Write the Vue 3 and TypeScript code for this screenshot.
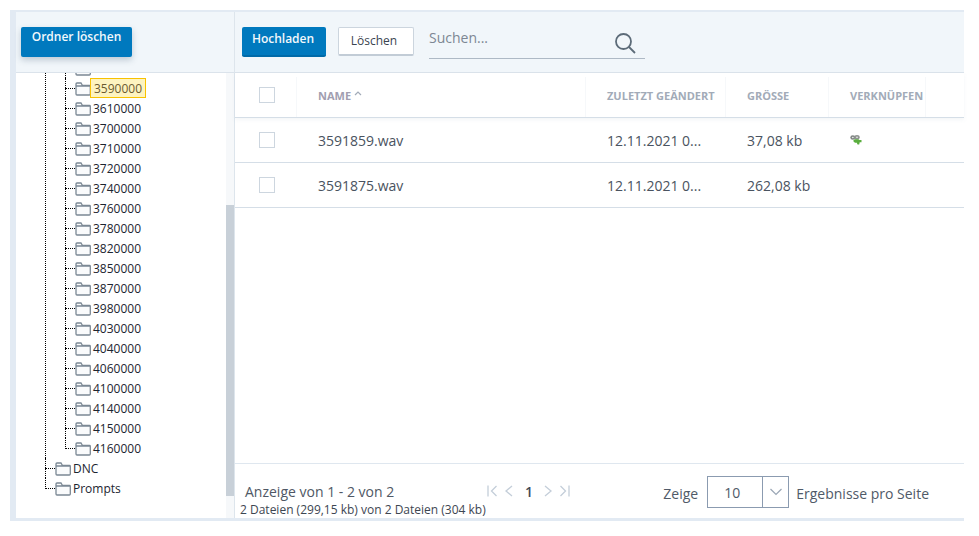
<script setup lang="ts">
const folders: string[] = [
  '3610000', '3700000', '3710000', '3720000', '3740000', '3760000', '3780000', '3820000',
  '3850000', '3870000', '3980000', '4030000', '4040000', '4060000', '4100000', '4140000',
  '4150000', '4160000',
]
const files = [
  { name: '3591859.wav', date: '12.11.2021 0...', size: '37,08 kb', link: true },
  { name: '3591875.wav', date: '12.11.2021 0...', size: '262,08 kb', link: false },
]
</script>

<template>
  <div class="page">
    <div class="frame">
      <aside class="side">
        <div class="side-head">
          <button class="btn primary raised">Ordner löschen</button>
        </div>
        <div class="tree-wrap">
          <div class="tree">
            <ul class="level one">
              <li class="branch">
                <ul class="level two">
                  <li class="node">
                    <svg class="folder" viewBox="0 0 16 14"><path d="M1 3V2q0-1 1-1h4l1.500 2.500H14.500q.8 0 .8.8V12q0 1-1 1H2q-1 0-1-1ZM1 4h14.300" /></svg>
                  </li>
                  <li class="node">
                    <svg class="folder" viewBox="0 0 16 14"><path d="M1 3V2q0-1 1-1h4l1.500 2.500H14.500q.8 0 .8.8V12q0 1-1 1H2q-1 0-1-1ZM1 4h14.300" /></svg>
                    <span class="label selected">3590000</span>
                  </li>
                  <li v-for="f in folders" :key="f" class="node">
                    <svg class="folder" viewBox="0 0 16 14"><path d="M1 3V2q0-1 1-1h4l1.500 2.500H14.500q.8 0 .8.8V12q0 1-1 1H2q-1 0-1-1ZM1 4h14.300" /></svg>
                    <span class="label">{{ f }}</span>
                  </li>
                </ul>
              </li>
              <li class="node">
                <svg class="folder" viewBox="0 0 16 14"><path d="M1 3V2q0-1 1-1h4l1.500 2.500H14.500q.8 0 .8.8V12q0 1-1 1H2q-1 0-1-1ZM1 4h14.300" /></svg>
                <span class="label">DNC</span>
              </li>
              <li class="node">
                <svg class="folder" viewBox="0 0 16 14"><path d="M1 3V2q0-1 1-1h4l1.500 2.500H14.500q.8 0 .8.8V12q0 1-1 1H2q-1 0-1-1ZM1 4h14.300" /></svg>
                <span class="label">Prompts</span>
              </li>
            </ul>
          </div>
          <div class="track"><div class="thumb"></div></div>
        </div>
      </aside>

      <main class="main">
        <div class="toolbar">
          <button class="btn primary solid">Hochladen</button>
          <button class="btn plain">Löschen</button>
          <div class="search">
            <span class="placeholder">Suchen...</span>
            <svg class="lens" viewBox="0 0 22 22" width="22" height="22">
              <circle cx="9.500" cy="9.500" r="7.500" />
              <path d="M15 15l6 6" />
            </svg>
          </div>
        </div>

        <div class="row head">
          <div class="cell check"><span class="box"></span></div>
          <div class="cell name">NAME
            <svg class="caret" viewBox="0 0 8 5" width="8" height="5"><path d="M1 4l3-3 3 3" /></svg>
          </div>
          <div class="cell">ZULETZT GEÄNDERT</div>
          <div class="cell">GRÖSSE</div>
          <div class="cell">VERKNÜPFEN</div>
          <div class="cell last"></div>
        </div>
        <div v-for="file in files" :key="file.name" class="row body">
          <div class="cell check"><span class="box"></span></div>
          <div class="cell name">{{ file.name }}</div>
          <div class="cell">{{ file.date }}</div>
          <div class="cell">{{ file.size }}</div>
          <div class="cell">
            <svg v-if="file.link" class="link" viewBox="0 0 12 10" width="12" height="10">
              <ellipse cx="2.800" cy="2.500" rx="2.500" ry="2.300" fill="#7f8482" />
              <ellipse cx="7" cy="2.300" rx="2.700" ry="2.200" fill="#8f9391" />
              <ellipse cx="2.800" cy="2.500" rx="1" ry=".8" fill="#e4e6e5" />
              <ellipse cx="7" cy="2.300" rx="1" ry=".8" fill="#e4e6e5" />
              <path d="M3.500 5 5 4.300h3.500l1 .7h2v2.300h-1.800l-.5 2.200H7.500L6.800 7.800H5L3.500 6.500Z" fill="#5aae3e" />
            </svg>
          </div>
          <div class="cell last"></div>
        </div>
        <div class="spacer"></div>

        <div class="footer">
          <div class="info">
            <div class="info-top">
              <span class="showing">Anzeige von 1 - 2 von 2</span>
              <div class="pager">
                <svg viewBox="0 0 11 12" width="11" height="12"><path d="M1 .5v11M9.500 1l-5 5 5 5" /></svg>
                <svg viewBox="0 0 9 12" width="9" height="12"><path d="M8 1L2 6l6 5" /></svg>
                <span class="current">1</span>
                <svg viewBox="0 0 9 12" width="9" height="12"><path d="M1 1l6 5-6 5" /></svg>
                <svg viewBox="0 0 11 12" width="11" height="12"><path d="M10 .5v11M1.500 1l5 5-5 5" /></svg>
              </div>
            </div>
            <div class="totals">2 Dateien (299,15 kb) von 2 Dateien (304 kb)</div>
          </div>
          <div class="size">
            <span>Zeige</span>
            <div class="select">
              <span class="value">10</span>
              <span class="arrow">
                <svg viewBox="0 0 14 8" width="14" height="8"><path d="M1.500 1l5.500 5.500L12.500 1" /></svg>
              </span>
            </div>
            <span class="results">Ergebnisse pro Seite</span>
          </div>
        </div>
      </main>
    </div>
  </div>
</template>

<style scoped>
.page {
  width: 979px;
  height: 536px;
  padding: 10px 15px 15px 10px;
  box-sizing: border-box;
  background: #fff;
  font-family: "Open Sans", sans-serif;
  color: #4a5360;
}
.frame {
  display: flex;
  height: 511px;
  box-sizing: border-box;
  border-top: 2px solid #e2eaf3;
  border-left: 6px solid #e2eaf3;
  border-bottom: 3px solid #e2eaf3;
  background: #fff;
}
.side {
  width: 219px;
  flex: none;
  display: flex;
  flex-direction: column;
  border-right: 1px solid #dde5ec;
  box-sizing: border-box;
}
.side-head {
  height: 61px;
  flex: none;
  box-sizing: border-box;
  padding: 12px 0 0 5px;
  background: #f1f6fa;
  border-bottom: 1px solid #dbe3eb;
}
.btn {
  font-family: inherit;
  box-sizing: border-box;
  font-size: 12px;
  padding: 0;
  border-radius: 2px;
}
.primary {
  background: #0079be;
  border: 0;
  color: #f2f8fc;
  font-weight: 600;
}
.raised {
  width: 111px;
  height: 30px;
  padding-bottom: 10px;
  box-shadow: 0 3px 6px rgba(40, 70, 100, 0.25);
}
.tree-wrap {
  flex: 1;
  min-height: 0;
  display: flex;
  overflow: hidden;
}
.tree {
  flex: 1;
  overflow: hidden;
  position: relative;
}
.level {
  list-style: none;
  margin: 0;
  padding: 0;
}
.one {
  margin: -15px 0 0 29px;
}
.two {
  margin-left: 20px;
}
.node {
  position: relative;
  height: 20px;
  display: flex;
  align-items: center;
  padding-left: 10px;
  font-size: 12px;
  color: #1c2530;
}
.node::before {
  content: "";
  position: absolute;
  left: 0;
  top: 10px;
  width: 10px;
  border-top: 1px dotted #000;
}
.node::after,
.branch::after {
  content: "";
  position: absolute;
  left: 0;
  top: 0;
  bottom: 0;
  border-left: 1px dotted #000;
}
.node:last-child::after {
  bottom: 9px;
}
.branch {
  position: relative;
}
.folder {
  width: 16px;
  height: 14px;
  flex: none;
  margin-top: 2px;
  fill: #fafbfc;
  stroke: #7b8894;
  stroke-width: 1.300;
}
.label {
  height: 20px;
  box-sizing: border-box;
  line-height: 18px;
  padding: 2px 3px 0;
  margin-left: -1px;
  white-space: nowrap;
}
.selected {
  background: #fdf3c0;
  border: 1px solid #f8c200;
  padding-top: 1px;
  color: #6a5a30;
}
.track {
  width: 8px;
  flex: none;
  background: #f6f8fa;
  padding-top: 132px;
  box-sizing: border-box;
}
.thumb {
  height: 291px;
  background: #c8d0d8;
}
.main {
  flex: 1;
  min-width: 0;
  display: flex;
  flex-direction: column;
}
.toolbar {
  height: 61px;
  flex: none;
  box-sizing: border-box;
  display: flex;
  align-items: flex-start;
  padding: 15px 0 0 7px;
  background: #f1f6fa;
  border-bottom: 1px solid #dbe3eb;
}
.solid {
  width: 84px;
  height: 30px;
  padding: 0 2px 5px 0;
  border-bottom: 2px solid #006aa8;
}
.plain {
  width: 76px;
  height: 29px;
  margin-left: 12px;
  padding: 0 4px 2px 0;
  background: #fff;
  border: 1px solid #ccd5de;
  border-bottom: 2px solid #c2ccd6;
  color: #3a4450;
  font-size: 12px;
}
.search {
  width: 216px;
  height: 32px;
  margin-left: 15px;
  box-sizing: border-box;
  border-bottom: 1px solid #aeb9c5;
  display: flex;
  justify-content: space-between;
  position: relative;
}
.placeholder {
  font-size: 14px;
  line-height: 22px;
  color: #7d8793;
}
.lens {
  margin: 5px 9px 0 0;
  fill: none;
  stroke: #5c6b78;
  stroke-width: 1.800;
}
.row {
  display: grid;
  grid-template-columns: 62px 289px 140px 103px 97px 38px;
  flex: none;
  box-sizing: border-box;
  border-bottom: 1px solid #d5dee7;
}
.head {
  height: 45px;
  font-size: 11px;
  font-weight: 700;
  color: #a2abb8;
  box-shadow: 0 2px 4px rgba(120, 140, 160, 0.08);
}
.body {
  height: 45px;
  font-size: 14px;
  color: #4a5360;
}
.cell {
  display: flex;
  align-items: center;
  padding-left: 21px;
  white-space: nowrap;
  box-sizing: border-box;
  min-width: 0;
}
.head .cell {
  border-right: 1px solid #f6f8fa;
  margin: 4px 0 0;
  padding-bottom: 4px;
}
.head .cell.last {
  border-right: 0;
}
.head .name {
  gap: 3px;
  color: #a19eb0;
}
.cell.check {
  padding-left: 24px;
}
.box {
  width: 16px;
  height: 16px;
  box-sizing: border-box;
  border: 1px solid #cdd6df;
  background: #fff;
}
.caret {
  fill: none;
  stroke: #a2abb8;
  stroke-width: 1.200;
  margin-top: -3px;
}
.link {
  margin-top: -1px;
}
.spacer {
  flex: 1;
}
.footer {
  height: 55px;
  flex: none;
  box-sizing: border-box;
  border-top: 1px solid #dfe7ef;
  display: flex;
  justify-content: space-between;
  padding: 0 35px 0 5px;
}
.info {
  padding-top: 18px;
}
.info-top {
  display: flex;
  align-items: center;
  height: 18px;
  margin-bottom: 2px;
}
.showing {
  font-size: 14px;
  margin-left: 5px;
  width: 242px;
  color: #4f5865;
}
.pager {
  display: flex;
  align-items: center;
  gap: 6px;
}
.pager svg {
  fill: none;
  stroke: #c4ced9;
  stroke-width: 1.300;
}
.current {
  font-size: 14px;
  font-weight: 600;
  color: #3f4a58;
  width: 6px;
  margin: 0 7px 0 6px;
}
.totals {
  font-size: 12px;
  line-height: 15px;
  color: #3d4652;
}
.size {
  display: flex;
  align-items: flex-start;
  padding-top: 12px;
  font-size: 14px;
  line-height: 35px;
  color: #505a68;
}
.select {
  display: flex;
  width: 82px;
  height: 32px;
  margin-left: 9px;
  box-sizing: border-box;
  border: 1px solid #8b9bb0;
}
.value {
  width: 54px;
  padding-left: 16px;
  box-sizing: border-box;
  line-height: 32px;
}
.arrow {
  flex: 1;
  border-left: 1px solid #8b9bb0;
  display: flex;
  align-items: center;
  justify-content: center;
}
.arrow svg {
  fill: none;
  stroke: #9aa6b5;
  stroke-width: 1.200;
}
.results {
  margin-left: 7px;
}
</style>

<style>
html, body {
  margin: 0;
  background: #fff;
}
</style>
